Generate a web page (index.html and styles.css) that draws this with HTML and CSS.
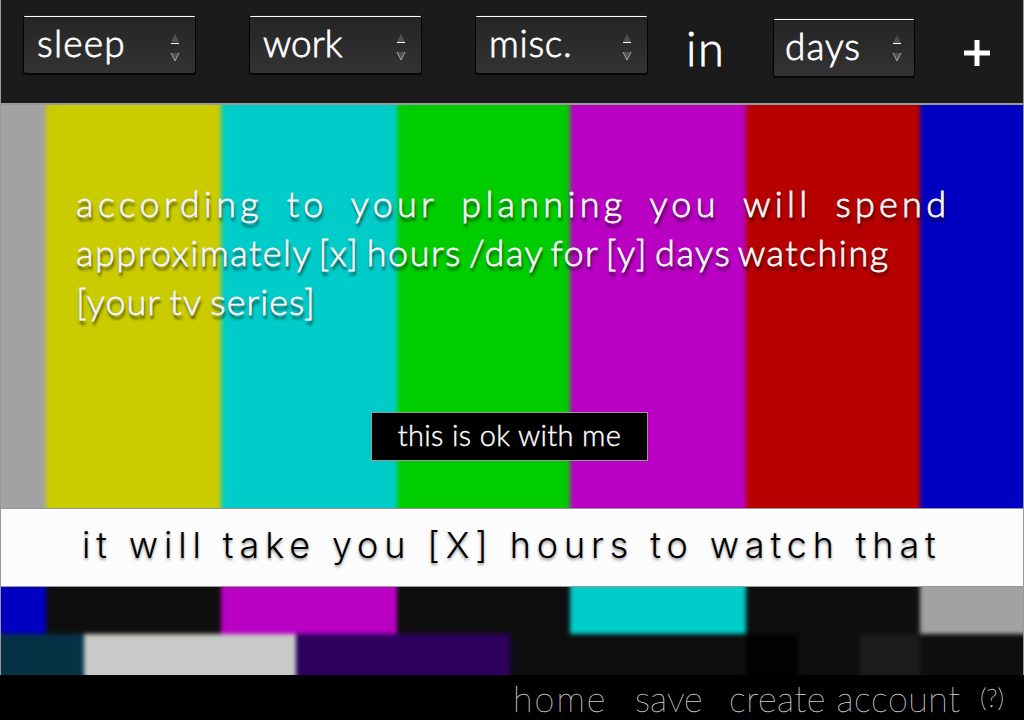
FILE: index.html
```
<!DOCTYPE html>
<html lang="en">
<head>
<meta charset="utf-8">
<title>watch planner</title>
<link rel="stylesheet" href="styles.css">
</head>
<body>
<div class="app">
  <header class="toolbar">
    <div class="select select-sleep"><span>sleep</span><svg class="arrows" viewBox="0 0 10 30"><path class="fill" d="M5 1 9 9H1Z"/><path class="rule" d="M1 10.500H9"/><path class="fill" d="M1 20H9L5 28Z"/><path class="edge" d="M1 20 5 28 9 20"/></svg></div>
    <div class="select select-work"><span>work</span><svg class="arrows" viewBox="0 0 10 30"><path class="fill" d="M5 1 9 9H1Z"/><path class="rule" d="M1 9.500H9"/><path class="fill" d="M1 19H9L5 27Z"/><path class="edge" d="M1 19 5 27 9 19"/></svg></div>
    <div class="select select-misc"><span>misc.</span><svg class="arrows" viewBox="0 0 10 30"><path class="fill" d="M5 1 9 9H1Z"/><path class="rule" d="M1 9.500H9"/><path class="fill" d="M1 19H9L5 27Z"/><path class="edge" d="M1 19 5 27 9 19"/></svg></div>
    <span class="in">in</span>
    <div class="select select-days"><span>days</span><svg class="arrows" viewBox="0 0 10 30"><path class="fill" d="M5 1 9 9H1Z"/><path class="rule" d="M1 9.500H9"/><path class="fill" d="M1 19H9L5 27Z"/><path class="edge" d="M1 19 5 27 9 19"/></svg></div>
    <svg class="plus" viewBox="0 0 28 28"><path d="M14 1V27M1 14H27"/></svg>
  </header>
  <main class="stage">
    <div class="pattern">
      <div class="bars bars-top"><i class="gray"></i><i class="yellow"></i><i class="cyan"></i><i class="green"></i><i class="magenta"></i><i class="red"></i><i class="blue"></i></div>
      <div class="bars bars-mid"><i class="blue"></i><i class="dark"></i><i class="magenta"></i><i class="dark"></i><i class="cyan"></i><i class="dark"></i><i class="gray"></i></div>
      <div class="bars bars-low"><i class="teal"></i><i class="white"></i><i class="purple"></i><i class="dark"></i><i class="black"></i><i class="dark"></i><i class="coal"></i><i class="dark"></i></div>
    </div>
    <div class="content">
      <div class="summary">
        <div class="line line-a">according to your planning you will spend</div>
        <div class="line line-b">approximately [x] hours /day for [y] days watching</div>
        <div class="line line-c">[your tv series]</div>
      </div>
      <div class="confirm"><span>this is ok with me</span></div>
      <div class="banner"><span>it will take you [X] hours to watch that</span></div>
    </div>
  </main>
  <footer class="footer">
    <span class="home">home</span><span class="save">save</span><span class="create">create account</span><span class="help">(?)</span>
  </footer>
</div>
</body>
</html>
```
FILE: styles.css
```
* { box-sizing: border-box; }
body { margin: 0; font-family: Lato, sans-serif; font-weight: 300; background: #000; }
.app { width: 1024px; height: 720px; display: flex; flex-direction: column; overflow: hidden; white-space: nowrap; }
.toolbar { height: 105px; flex: none; display: flex; align-items: flex-start; background: #1b1b1b; border: solid #999; border-width: 0 1px 2px; padding: 15px 0 0 22px; color: #fff; }
.select { width: 173px; height: 59px; flex: none; display: flex; justify-content: space-between; padding: 0 15px 0 13px; border: 1px solid #050505; border-top: 0; border-radius: 3px; background: linear-gradient(#fff, #fff) 0 1px / 100% 1px no-repeat, linear-gradient(#242424, #333); box-shadow: 0 1px 1px #080808; font-size: 37px; line-height: 56px; }
.select span { -webkit-text-stroke: 0.8px #fff; }
.select-sleep { letter-spacing: 1.2px; }
.select-work, .select-misc { margin-left: 53px; }
.select-misc { letter-spacing: .7px; }
.arrows { width: 10px; height: 30px; margin-top: 18px; flex: none; }
.fill { fill: #505050; }
.rule { stroke: #fff; stroke-width: 1; }
.edge { fill: none; stroke: #aaa; stroke-width: 1; }
.in { font-size: 47px; line-height: 56px; width: 38px; margin: 5px 0 0 38px; letter-spacing: 1.5px; -webkit-text-stroke: 0.8px #fff; }
.select-days { width: 142px; margin: 3px 0 0 49px; padding: 0 12px 0 11px; letter-spacing: 1px; }
.select-days .arrows { margin-top: 16px; }
.plus { width: 28px; height: 28px; margin: 24px 0 0 48px; flex: none; }
.plus path { stroke: #fff; stroke-width: 5; }
.stage { height: 570px; flex: none; display: grid; overflow: hidden; border: solid #999; border-width: 0 1px; }
.pattern, .content { grid-area: 1 / 1; min-width: 0; min-height: 0; }
.pattern { margin: -10px; width: 1042px; height: 590px; filter: blur(2.3px); }
.bars { display: grid; grid-template-columns: 55px 175px 176px 173px 176px 174px 113px; }
.bars-top { height: 440px; }
.bars-mid { height: 99px; }
.bars-low { height: 51px; grid-template-columns: 93px 212px 214px 236px 52px 62px 60px 113px; }
.gray { background: #a2a2a2; } .yellow { background: #cacc00; } .cyan { background: #00cdca; } .green { background: #00cd00; }
.magenta { background: #b900c3; } .red { background: #b70000; } .blue { background: #0000c2; } .dark { background: #0e0e0e; }
.teal { background: #063246; } .white { background: #c8cac7; } .purple { background: #2d0060; } .black { background: #020204; } .coal { background: #1c1c1c; }
.content { position: relative; display: flex; flex-direction: column; align-items: center; }
.summary { width: 100%; padding: 74px 0 0 75px; height: 307px; color: #f5f5f5; font-size: 36px; line-height: 49px; text-shadow: 0 0 1px #444, 1px 4px 3px rgba(0,0,0,.75); }
.line { height: 49px; -webkit-text-stroke: 0.8px #f5f5f5; }
.line-a { letter-spacing: 4.25px; word-spacing: 10px; }
.line-b { letter-spacing: 1.52px; word-spacing: -4.1px; }
.line-c { letter-spacing: 1px; word-spacing: -1.5px; }
.confirm { width: 277px; height: 49px; margin-left: -5px; border: 1px solid #999; background: #000; color: #fff; font-size: 29px; line-height: 44px; text-align: center; letter-spacing: .35px; -webkit-text-stroke: 0.4px #fff; }
.banner { width: 100%; height: 79px; margin-top: 47px; padding-left: 81px; border: solid #999; border-width: 1px 0; background: #fcfcfc; color: #000; font-family: Inter, "Liberation Sans", sans-serif; font-size: 36px; line-height: 72px; letter-spacing: 5.85px; text-shadow: 0 2px 3px rgba(0,0,0,.4); }
.footer { height: 45px; flex: none; display: flex; padding-left: 513px; color: #ddd; background: #000; font-size: 36px; font-weight: 100; line-height: 46px; -webkit-text-stroke: 0.3px #ccc; }
.home { width: 122px; letter-spacing: 2px; } .save { width: 94px; } .create { width: 251px; letter-spacing: .5px; } .help { font-size: 26px; line-height: 44px; }
```
